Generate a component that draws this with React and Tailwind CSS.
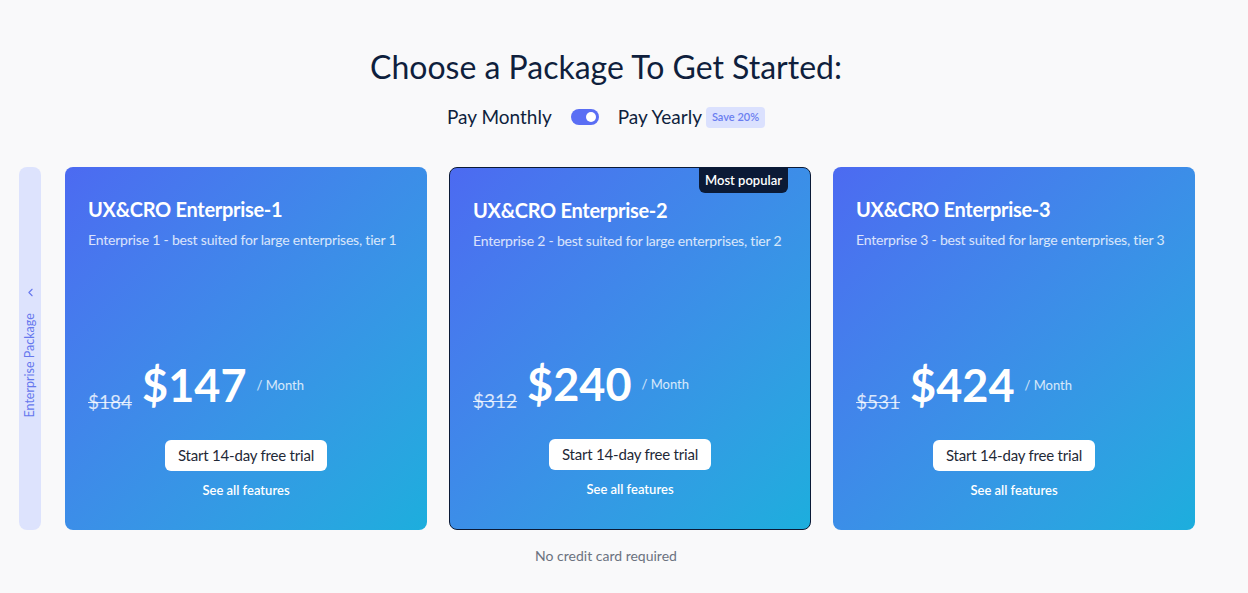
import { ChevronLeft } from "lucide-react";

const plans = [
  { id: 1, old: "$184", price: "$147", popular: false },
  { id: 2, old: "$312", price: "$240", popular: true },
  { id: 3, old: "$531", price: "$424", popular: false },
];

const PlanCard = ({ plan }) => (
  <div
    className={`relative w-[362px] h-[363px] rounded-lg bg-linear-to-br from-[#4c6af1] to-[#1caedd] flex flex-col px-[23px] pt-[29px] pb-[30px] text-white ${
      plan.popular ? "border border-[#0b1a36]" : ""
    }`}
  >
    {plan.popular && (
      <div className="absolute top-0 right-[22px] bg-[#0b1a36] text-white text-[13px] font-semibold px-[6px] h-[25px] flex items-center rounded-b-md">
        Most popular
      </div>
    )}
    <h2 className="text-[20px] font-bold leading-[26px] tracking-[-0.3px]">UX&amp;CRO Enterprise-{plan.id}</h2>
    <p className="mt-[8px] text-[14px] leading-[20px] text-white/80 tracking-[-0.2px] whitespace-nowrap">
      Enterprise {plan.id} - best suited for large enterprises, tier {plan.id}
    </p>
    <div className="mt-auto flex items-end">
      <span className="text-[19px] text-white/80 line-through leading-none mb-[1px]">{plan.old}</span>
      <span className="ml-[10px] text-[45px] font-bold leading-none mb-[4px]">{plan.price}</span>
      <span className="ml-[10px] self-start mt-[13px] text-[13px] text-white/80">/ Month</span>
    </div>
    <div className="mt-[28px] flex flex-col items-center">
      <button className="w-[162px] h-[31px] bg-white rounded-md text-[15px] text-[#1f2937] tracking-[-0.2px]">
        Start 14-day free trial
      </button>
      <a className="mt-[10px] text-[13px] font-semibold text-white">See all features</a>
    </div>
  </div>
);

export default function App() {
  return (
    <div className="min-h-[593px] bg-[#f9f9fa] font-['Lato',sans-serif] text-[#0f1f3d] pt-[46px]">
      <h1 className="text-center text-[32px] leading-[42px] pr-[36px]">Choose a Package To Get Started:</h1>
      <div className="mt-[17px] flex items-center justify-center gap-[19px] pr-[36px] h-[24px]">
        <span className="text-[19px]">Pay Monthly</span>
        <span className="w-[28px] h-[16px] rounded-full bg-[#5a6ef4] flex items-center justify-end pr-[3px]">
          <span className="w-[10px] h-[10px] rounded-full bg-white" />
        </span>
        <span className="flex items-center gap-[4px]">
          <span className="text-[19px]">Pay Yearly</span>
          <span className="bg-[#dbe1fe] text-[#6a7ef0] text-[11px] font-semibold px-[6px] h-[21px] flex items-center rounded-sm">
            Save 20%
          </span>
        </span>
      </div>
      <div className="mt-[38px] flex pl-[19px] gap-[22px]">
        <div className="w-[22px] h-[363px] rounded-lg bg-[#dde3fd] flex flex-col items-center pt-[119px] mr-[2px] text-[#6678ee]">
          <ChevronLeft className="w-[13px] h-[13px]" strokeWidth={2} />
          <div className="mt-[6px] h-[120px] w-[22px] flex items-center justify-center">
            <span className="-rotate-90 whitespace-nowrap text-[12.5px]">Enterprise Package</span>
          </div>
        </div>
        {plans.map((p) => (
          <PlanCard key={p.id} plan={p} />
        ))}
      </div>
      <p className="mt-[15px] text-center text-[14px] text-[#6b7280] pr-[36px]">No credit card required</p>
    </div>
  );
}
